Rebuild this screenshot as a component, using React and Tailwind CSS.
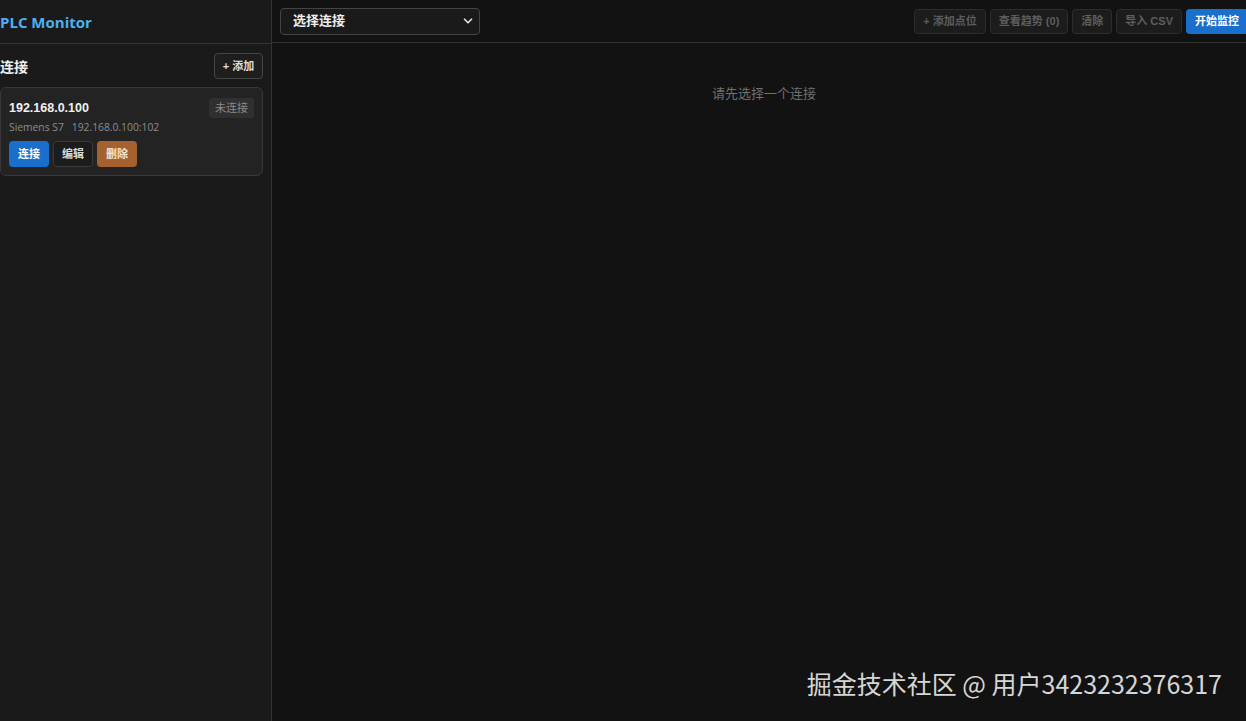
import { ChevronDown } from 'lucide-react';

const font = { fontFamily: '"Open Sans", "Noto Sans CJK SC", sans-serif' };
const btnFont = { fontFamily: '"Liberation Sans", "Noto Sans CJK SC", sans-serif' };

function ToolButton({ children }) {
  return (
    <button className="h-[25px] px-[8px] rounded-[4px] bg-[#1c1c1c] border border-[#2c2c2c] text-[11px] font-bold text-[#5e5e5e]" style={btnFont}>
      {children}
    </button>
  );
}

export default function App() {
  return (
    <div className="w-[1246px] h-[721px] flex bg-[#121212] text-[#e6e6e6] overflow-hidden relative" style={font}>
      {/* Sidebar */}
      <aside className="w-[272px] shrink-0 bg-[#1a1a1a] border-r border-[#333] flex flex-col">
        <div className="h-[44px] flex items-center border-b border-[#333] pt-[2px]">
          <h1 className="text-[15px] font-bold text-[#4db0f0]">PLC Monitor</h1>
        </div>
        <div className="pr-[8px]">
          <div className="flex items-center justify-between mt-[9px] h-[26px]">
            <h2 className="text-[14px] font-bold text-[#f0f0f0]">连接</h2>
            <button className="h-[26px] w-[49px] rounded-[4px] border border-[#444] bg-[#1e1e1e] text-[11px] font-bold text-[#ddd]" style={btnFont}>
              + 添加
            </button>
          </div>
          <div className="mt-[8px] h-[89px] rounded-[6px] bg-[#232323] border border-[#383838] px-[8px] pt-[10px]">
            <div className="flex items-center justify-between">
              <span className="text-[12.5px] font-bold text-[#f0f0f0]" style={btnFont}>192.168.0.100</span>
              <span className="px-[6px] h-[20px] leading-[20px] rounded-[3px] bg-[#303030] text-[11px] text-[#8a8a8a]">未连接</span>
            </div>
            <div className="mt-[2px] text-[10.3px] text-[#8d8d8d] whitespace-pre">Siemens S7   192.168.0.100:102</div>
            <div className="mt-[6px] flex gap-[4px]">
              <button className="h-[26px] w-[40px] rounded-[4px] bg-[#1a6fcc] text-[11px] font-bold text-white" style={btnFont}>连接</button>
              <button className="h-[26px] w-[40px] rounded-[4px] border border-[#3a3a3a] bg-[#1c1c1c] text-[11px] font-bold text-[#ddd]" style={btnFont}>编辑</button>
              <button className="h-[26px] w-[40px] rounded-[4px] bg-[#a5622f] text-[11px] font-bold text-[#f3e3d6]" style={btnFont}>删除</button>
            </div>
          </div>
        </div>
      </aside>

      {/* Main */}
      <main className="flex-1 flex flex-col">
        <div className="h-[43px] shrink-0 flex items-center justify-between pl-[8px] border-b border-[#333]">
          <div className="w-[200px] h-[27px] rounded-[4px] border border-[#444] bg-[#1a1a1a] flex items-center justify-between pl-[12px] pr-[4px]">
            <span className="text-[13px] font-semibold text-[#eee]">选择连接</span>
            <ChevronDown size={14} strokeWidth={3} className="text-[#ddd]" />
          </div>
          <div className="flex gap-[4px] items-center">
            <ToolButton>+ 添加点位</ToolButton>
            <ToolButton>查看趋势 (0)</ToolButton>
            <ToolButton>清除</ToolButton>
            <ToolButton>导入 CSV</ToolButton>
            <button className="h-[25px] w-[62px] -mr-[2px] rounded-[4px] bg-[#1a6fcc] text-[11px] font-bold text-white text-left pl-[9px]" style={btnFont}>开始监控</button>
          </div>
        </div>
        <div className="flex justify-center pt-[41px] pl-[10px]">
          <span className="text-[13px] text-[#707070]">请先选择一个连接</span>
        </div>
      </main>

      <div className="absolute right-[24px] bottom-[19px] text-[25px] text-[#d6d6d6]" style={{ fontFamily: '"Noto Sans CJK SC", sans-serif' }}>
        掘金技术社区 @ 用户3423232376317
      </div>
    </div>
  );
}
